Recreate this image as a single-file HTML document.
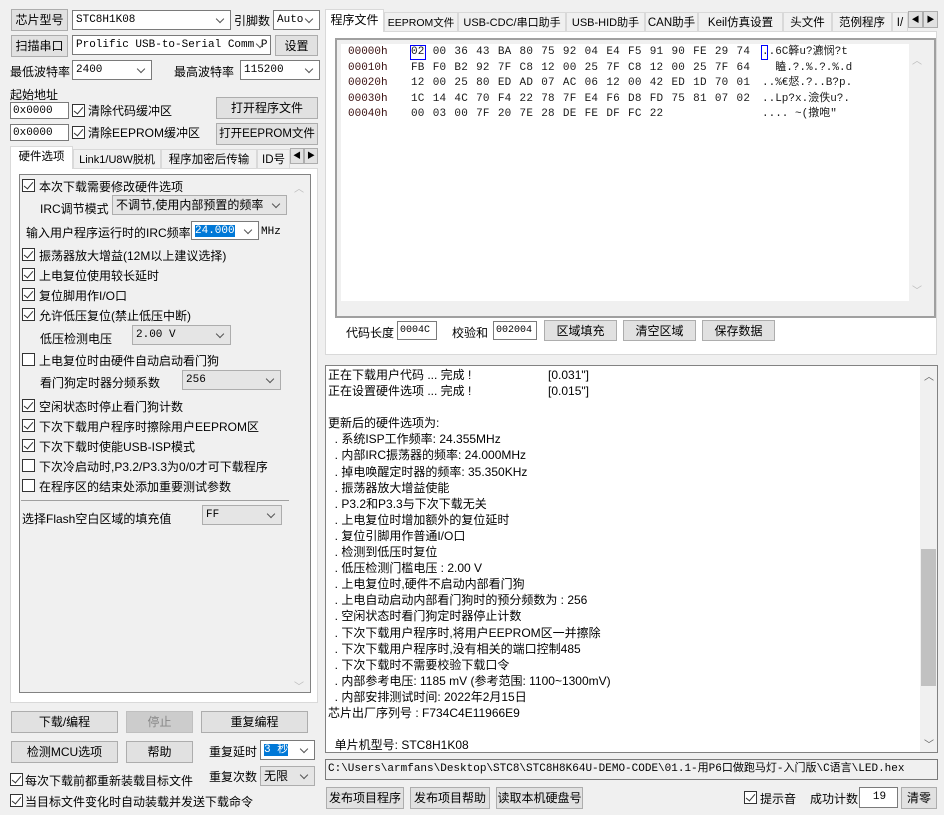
<!DOCTYPE html>
<html><head><meta charset="utf-8"><style>
*{box-sizing:border-box;margin:0;padding:0}
body{width:944px;height:815px;background:#f0f0f0;font-family:"Liberation Sans","Noto Sans CJK SC",sans-serif;font-size:12px;color:#000;position:relative;overflow:hidden}
.a{position:absolute;white-space:nowrap}
.btn{position:absolute;background:#e1e1e1;border:1px solid #adadad;text-align:center;line-height:20px;font-size:12px}
.sel{position:absolute;background:#fff;border:1px solid #7a7a7a;line-height:18px;padding-left:3px;font-family:"Liberation Mono","Noto Sans CJK SC",monospace;font-size:11px}
.sel.g{background:#e5e5e5;border-color:#adadad}
.sel:after{content:"";position:absolute;right:7px;top:5px;width:5px;height:5px;border-right:1px solid #555;border-bottom:1px solid #555;transform:rotate(45deg)}
.inp{position:absolute;background:#fff;border:1px solid #7a7a7a;line-height:16px;padding-left:2px;font-family:"Liberation Mono",monospace;font-size:11px}
.cb{position:absolute;width:13px;height:13px;border:1px solid #333;background:#fff}
.cb.k:after{content:"";position:absolute;left:3px;top:0px;width:4px;height:8px;border-right:1.5px solid #333;border-bottom:1.5px solid #333;transform:rotate(40deg)}
.tab{position:absolute;border:1px solid #d9d9d9;border-bottom:none;background:#f0f0f0;text-align:center;line-height:20px;overflow:hidden;font-size:11.5px}
.mono{font-family:"Liberation Mono","Noto Sans CJK SC",monospace;font-size:11px}
.log div{height:16.1px;line-height:16px;white-space:pre}
</style></head><body>
<div class="btn" style="left:11px;top:9px;width:57px;height:22px">芯片型号</div>
<div class="sel" style="left:72px;top:10px;width:159px;height:20px">STC8H1K08</div>
<div class="a" style="left:234px;top:12px">引脚数</div>
<div class="sel" style="left:273px;top:10px;width:47px;height:20px">Auto</div>
<div class="btn" style="left:11px;top:35px;width:57px;height:22px">扫描串口</div>
<div class="sel" style="left:72px;top:35px;width:199px;height:20px;overflow:hidden">Prolific USB-to-Serial Comm P</div>
<div class="btn" style="left:275px;top:35px;width:43px;height:21px">设置</div>
<div class="a" style="left:10px;top:63px">最低波特率</div>
<div class="sel" style="left:72px;top:60px;width:80px;height:20px">2400</div>
<div class="a" style="left:174px;top:63px">最高波特率</div>
<div class="sel" style="left:240px;top:60px;width:80px;height:20px">115200</div>
<div class="a" style="left:10px;top:86px">起始地址</div>
<div class="inp" style="left:10px;top:102px;width:59px;height:17px">0x0000</div>
<div class="cb k" style="left:72px;top:104px"></div><div class="a" style="left:88px;top:102px">清除代码缓冲区</div>
<div class="btn" style="left:216px;top:97px;width:102px;height:22px">打开程序文件</div>
<div class="inp" style="left:10px;top:124px;width:59px;height:17px">0x0000</div>
<div class="cb k" style="left:72px;top:126px"></div><div class="a" style="left:88px;top:124px">清除EEPROM缓冲区</div>
<div class="btn" style="left:216px;top:123px;width:102px;height:22px;font-size:11.5px">打开EEPROM文件</div>
<div style="position:absolute;left:10px;top:168px;width:308px;height:535px;background:#fff;border:1px solid #d9d9d9"></div>
<div class="tab" style="left:73px;top:149px;width:88px;height:19px;font-size:11px">Link1/U8W脱机</div>
<div class="tab" style="left:161px;top:149px;width:96px;height:19px">程序加密后传输</div>
<div class="tab" style="left:257px;top:149px;width:33px;height:19px">ID号</div>
<div class="tab" style="left:10px;top:146px;width:63px;height:23px;background:#fff">硬件选项</div>
<div class="btn" style="left:290px;top:148px;width:14px;height:16px;line-height:14px;font-size:8px">◀</div>
<div class="btn" style="left:304px;top:148px;width:14px;height:16px;line-height:14px;font-size:8px">▶</div>
<div style="position:absolute;left:19px;top:174px;width:292px;height:519px;background:#f0f0f0;border:1px solid #828282"></div>
<div class="a" style="left:294px;top:180px;color:#bbb;font-size:10px">︿</div>
<div class="a" style="left:294px;top:678px;color:#bbb;font-size:10px">﹀</div>
<div class="cb k" style="left:22px;top:179px"></div><div class="a" style="left:39px;top:178px">本次下载需要修改硬件选项</div>
<div class="a" style="left:40px;top:200px">IRC调节模式</div>
<div class="sel g" style="left:112px;top:195px;width:175px;height:20px;font-family:'Liberation Sans','Noto Sans CJK SC',sans-serif;font-size:12px">不调节,使用内部预置的频率</div>
<div class="a" style="left:26px;top:224px">输入用户程序运行时的IRC频率</div>
<div class="sel" style="left:191px;top:221px;width:68px;height:19px"><span style="background:#0078d7;color:#fff">24.000</span></div>
<div class="a mono" style="left:261px;top:226px">MHz</div>
<div class="cb k" style="left:22px;top:248px"></div><div class="a" style="left:39px;top:247px">振荡器放大增益(12M以上建议选择)</div>
<div class="cb k" style="left:22px;top:268px"></div><div class="a" style="left:39px;top:267px">上电复位使用较长延时</div>
<div class="cb k" style="left:22px;top:288px"></div><div class="a" style="left:39px;top:287px">复位脚用作I/O口</div>
<div class="cb k" style="left:22px;top:308px"></div><div class="a" style="left:39px;top:307px">允许低压复位(禁止低压中断)</div>
<div class="a" style="left:40px;top:330px">低压检测电压</div>
<div class="sel g" style="left:132px;top:325px;width:99px;height:20px">2.00 V</div>
<div class="cb" style="left:22px;top:353px"></div><div class="a" style="left:39px;top:352px">上电复位时由硬件自动启动看门狗</div>
<div class="a" style="left:40px;top:374px">看门狗定时器分频系数</div>
<div class="sel g" style="left:182px;top:370px;width:99px;height:20px">256</div>
<div class="cb k" style="left:22px;top:399px"></div><div class="a" style="left:39px;top:398px">空闲状态时停止看门狗计数</div>
<div class="cb k" style="left:22px;top:419px"></div><div class="a" style="left:39px;top:418px">下次下载用户程序时擦除用户EEPROM区</div>
<div class="cb k" style="left:22px;top:439px"></div><div class="a" style="left:39px;top:438px">下次下载时使能USB-ISP模式</div>
<div class="cb" style="left:22px;top:459px"></div><div class="a" style="left:39px;top:458px">下次冷启动时,P3.2/P3.3为0/0才可下载程序</div>
<div class="cb" style="left:22px;top:479px"></div><div class="a" style="left:39px;top:478px">在程序区的结束处添加重要测试参数</div>
<div style="position:absolute;left:21px;top:500px;width:268px;height:1px;background:#a0a0a0"></div>
<div class="a" style="left:22px;top:510px">选择Flash空白区域的填充值</div>
<div class="sel g" style="left:202px;top:505px;width:80px;height:20px">FF</div>
<div class="btn" style="left:11px;top:711px;width:107px;height:22px">下载/编程</div>
<div class="btn" style="left:126px;top:711px;width:67px;height:22px;background:#cccccc;color:#888;border-color:#bfbfbf">停止</div>
<div class="btn" style="left:201px;top:711px;width:107px;height:22px">重复编程</div>
<div class="btn" style="left:11px;top:741px;width:107px;height:22px">检测MCU选项</div>
<div class="btn" style="left:126px;top:741px;width:67px;height:22px">帮助</div>
<div class="a" style="left:209px;top:743px">重复延时</div>
<div class="sel" style="left:260px;top:740px;width:55px;height:20px"><span style="background:#0078d7;color:#fff">3 秒</span></div>
<div class="a" style="left:209px;top:768px">重复次数</div>
<div class="sel g" style="left:260px;top:766px;width:55px;height:20px;font-family:'Liberation Sans','Noto Sans CJK SC',sans-serif;font-size:12px">无限</div>
<div class="cb k" style="left:10px;top:773px"></div><div class="a" style="left:25px;top:772px">每次下载前都重新装载目标文件</div>
<div class="cb k" style="left:10px;top:794px"></div><div class="a" style="left:25px;top:793px">当目标文件变化时自动装载并发送下载命令</div>
<div style="position:absolute;left:325px;top:31px;width:612px;height:324px;background:#fff;border:1px solid #d9d9d9"></div>
<div class="tab" style="left:384px;top:12px;width:74px;height:19px;font-size:10.5px">EEPROM文件</div>
<div class="tab" style="left:458px;top:12px;width:108px;height:19px;font-size:11px">USB-CDC/串口助手</div>
<div class="tab" style="left:566px;top:12px;width:79px;height:19px;font-size:11px">USB-HID助手</div>
<div class="tab" style="left:645px;top:12px;width:53px;height:19px">CAN助手</div>
<div class="tab" style="left:698px;top:12px;width:85px;height:19px">Keil仿真设置</div>
<div class="tab" style="left:783px;top:12px;width:49px;height:19px">头文件</div>
<div class="tab" style="left:832px;top:12px;width:60px;height:19px">范例程序</div>
<div class="tab" style="left:892px;top:12px;width:16px;height:19px">I/</div>
<div class="tab" style="left:325px;top:9px;width:59px;height:23px;background:#fff;font-size:12px">程序文件</div>
<div class="btn" style="left:908px;top:11px;width:15px;height:17px;line-height:15px;font-size:8px">◀</div>
<div class="btn" style="left:923px;top:11px;width:15px;height:17px;line-height:15px;font-size:8px">▶</div>
<div style="position:absolute;left:335px;top:38px;width:601px;height:280px;background:#f0f0f0;border:2px solid #a0a0a0"></div>
<div style="position:absolute;left:341px;top:44px;width:589px;height:257px;background:#fff"></div>
<div style="position:absolute;left:909px;top:44px;width:21px;height:257px;background:#f0f0f0"></div>
<div class="a" style="left:912px;top:52px;color:#bbb;font-size:10px">︿</div>
<div class="a" style="left:912px;top:282px;color:#bbb;font-size:10px">﹀</div>
<div class="mono" style="position:absolute;left:348px;top:45px;line-height:15.5px;color:#3a1010;white-space:pre">00000h
00010h
00020h
00030h
00040h</div>
<div class="mono" style="position:absolute;left:411px;top:45px;line-height:15.5px;color:#1a1a1a;white-space:pre;letter-spacing:0.2px;word-spacing:1.3px">02 00 36 43 BA 80 75 92 04 E4 F5 91 90 FE 29 74
FB F0 B2 92 7F C8 12 00 25 7F C8 12 00 25 7F 64
12 00 25 80 ED AD 07 AC 06 12 00 42 ED 1D 70 01
1C 14 4C 70 F4 22 78 7F E4 F6 D8 FD 75 81 07 02
00 03 00 7F 20 7E 28 DE FE DF FC 22</div>
<div style="position:absolute;left:410px;top:45px;width:16px;height:15px;border:1px solid #0000ff"></div>
<div style="position:absolute;left:761px;top:45px;width:7px;height:15px;border:1px solid #0000ff"></div>
<div class="mono" style="position:absolute;left:762px;top:45px;line-height:15.5px;color:#1a1a1a;white-space:pre">..6C簳u?瀌悯?t
  瞌.?.%.?.%.d
..%€惄.?..B?p.
..Lp?x.澰佚u?.
.... ~(撴咆"</div>
<div class="a" style="left:346px;top:324px">代码长度</div>
<div class="inp" style="left:397px;top:321px;width:40px;height:19px;font-size:10px;line-height:17px">0004C</div>
<div class="a" style="left:452px;top:324px">校验和</div>
<div class="inp" style="left:493px;top:321px;width:44px;height:19px;font-size:10px;line-height:17px">002004</div>
<div class="btn" style="left:544px;top:320px;width:73px;height:21px">区域填充</div>
<div class="btn" style="left:623px;top:320px;width:73px;height:21px">清空区域</div>
<div class="btn" style="left:702px;top:320px;width:73px;height:21px">保存数据</div>
<div style="position:absolute;left:325px;top:365px;width:613px;height:388px;background:#fff;border:1px solid #828282;overflow:hidden">
<div style="position:absolute;right:0;top:0;width:17px;height:386px;background:#f0f0f0"></div>
<div style="position:absolute;right:1px;top:183px;width:15px;height:137px;background:#c1c1c1"></div>
<div class="a" style="right:3px;top:2px;color:#606060;font-size:10px">︿</div>
<div class="a" style="right:3px;top:370px;color:#606060;font-size:10px">﹀</div>
<div class="log" style="position:absolute;left:2px;top:1px">
<div>正在下载用户代码 ... 完成 !                       [0.031"]</div>
<div>正在设置硬件选项 ... 完成 !                       [0.015"]</div>
<div> </div>
<div>更新后的硬件选项为:</div>
<div>  . 系统ISP工作频率: 24.355MHz</div>
<div>  . 内部IRC振荡器的频率: 24.000MHz</div>
<div>  . 掉电唤醒定时器的频率: 35.350KHz</div>
<div>  . 振荡器放大增益使能</div>
<div>  . P3.2和P3.3与下次下载无关</div>
<div>  . 上电复位时增加额外的复位延时</div>
<div>  . 复位引脚用作普通I/O口</div>
<div>  . 检测到低压时复位</div>
<div>  . 低压检测门槛电压 : 2.00 V</div>
<div>  . 上电复位时,硬件不启动内部看门狗</div>
<div>  . 上电自动启动内部看门狗时的预分频数为 : 256</div>
<div>  . 空闲状态时看门狗定时器停止计数</div>
<div>  . 下次下载用户程序时,将用户EEPROM区一并擦除</div>
<div>  . 下次下载用户程序时,没有相关的端口控制485</div>
<div>  . 下次下载时不需要校验下载口令</div>
<div>  . 内部参考电压: 1185 mV (参考范围: 1100~1300mV)</div>
<div>  . 内部安排测试时间: 2022年2月15日</div>
<div>芯片出厂序列号 : F734C4E11966E9</div>
<div> </div>
<div>  单片机型号: STC8H1K08</div>
</div></div>
<div class="inp mono" style="left:325px;top:759px;width:613px;height:21px;line-height:19px;background:#f0f0f0;font-size:11px">C:\Users\armfans\Desktop\STC8\STC8H8K64U-DEMO-CODE\01.1-用P6口做跑马灯-入门版\C语言\LED.hex</div>
<div class="btn" style="left:326px;top:787px;width:78px;height:22px">发布项目程序</div>
<div class="btn" style="left:410px;top:787px;width:80px;height:22px">发布项目帮助</div>
<div class="btn" style="left:496px;top:787px;width:87px;height:22px">读取本机硬盘号</div>
<div class="cb k" style="left:744px;top:791px"></div><div class="a" style="left:760px;top:790px">提示音</div>
<div class="a" style="left:810px;top:790px">成功计数</div>
<div class="inp" style="left:859px;top:787px;width:39px;height:21px;text-align:center;line-height:19px">19</div>
<div class="btn" style="left:901px;top:787px;width:36px;height:22px">清零</div>
</body></html>
